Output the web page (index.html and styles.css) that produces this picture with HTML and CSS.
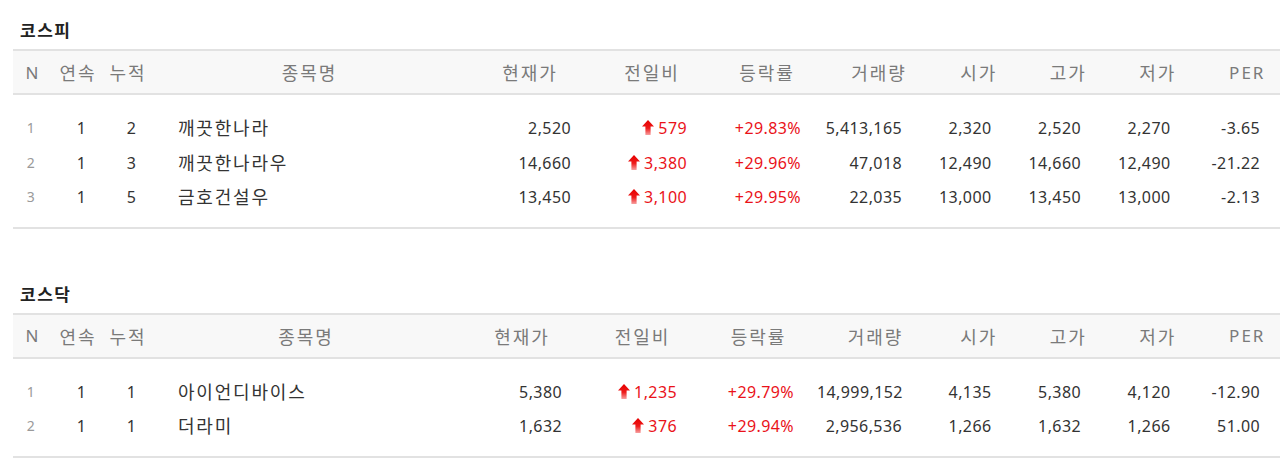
FILE: index.html
```html
<!DOCTYPE html>
<html lang="ko">
<head>
<meta charset="utf-8">
<title>상한가</title>
<link rel="stylesheet" href="styles.css">
</head>
<body>
<svg class="defs" width="0" height="0" aria-hidden="true">
  <defs>
    <linearGradient id="upg" x1="0" y1="0" x2="0" y2="1">
      <stop offset="0" stop-color="#e60000"/>
      <stop offset="0.55" stop-color="#ee1a1a"/>
      <stop offset="1" stop-color="#f7a0a0"/>
    </linearGradient>
    <symbol id="up" viewBox="0 0 12 15">
      <polygon points="6,0 12,6.5 8.6,6.5 8.6,15 3.4,15 3.4,6.5 0,6.5" fill="url(#upg)"/>
    </symbol>
  </defs>
</svg>
<div class="page">
  <section class="market">
    <h2 class="market-title">코스피</h2>
    <div class="table-wrap">
      <table class="rank kospi">
        <colgroup>
          <col class="c-n"><col class="c-cnt"><col class="c-cnt"><col class="c-name-1">
          <col class="c-price-1"><col class="c-diff-1"><col class="c-rate-1"><col class="c-vol-1">
          <col class="c-small"><col class="c-small"><col class="c-small"><col class="c-small">
        </colgroup>
        <thead>
          <tr><th class="latin">N</th><th>연속</th><th>누적</th><th>종목명</th><th>현재가</th><th>전일비</th><th>등락률</th><th>거래량</th><th>시가</th><th>고가</th><th>저가</th><th class="latin">PER</th></tr>
        </thead>
        <tbody>
          <tr><td class="n">1</td><td class="cnt">1</td><td class="cnt">2</td><td class="name">깨끗한나라</td><td class="num">2,520</td><td class="num up"><svg class="arrow"><use href="#up"/></svg>579</td><td class="num up">+29.83%</td><td class="num wide">5,413,165</td><td class="num wide">2,320</td><td class="num wide">2,520</td><td class="num wide">2,270</td><td class="num wide">-3.65</td></tr>
          <tr><td class="n">2</td><td class="cnt">1</td><td class="cnt">3</td><td class="name">깨끗한나라우</td><td class="num">14,660</td><td class="num up"><svg class="arrow"><use href="#up"/></svg>3,380</td><td class="num up">+29.96%</td><td class="num wide">47,018</td><td class="num wide">12,490</td><td class="num wide">14,660</td><td class="num wide">12,490</td><td class="num wide">-21.22</td></tr>
          <tr><td class="n">3</td><td class="cnt">1</td><td class="cnt">5</td><td class="name">금호건설우</td><td class="num">13,450</td><td class="num up"><svg class="arrow"><use href="#up"/></svg>3,100</td><td class="num up">+29.95%</td><td class="num wide">22,035</td><td class="num wide">13,000</td><td class="num wide">13,450</td><td class="num wide">13,000</td><td class="num wide">-2.13</td></tr>
        </tbody>
      </table>
    </div>
  </section>
  <section class="market">
    <h2 class="market-title">코스닥</h2>
    <div class="table-wrap">
      <table class="rank kosdaq">
        <colgroup>
          <col class="c-n"><col class="c-cnt"><col class="c-cnt"><col class="c-name-2">
          <col class="c-price-2"><col class="c-diff-2"><col class="c-rate-2"><col class="c-vol-2">
          <col class="c-small"><col class="c-small"><col class="c-small"><col class="c-small">
        </colgroup>
        <thead>
          <tr><th class="latin">N</th><th>연속</th><th>누적</th><th>종목명</th><th>현재가</th><th>전일비</th><th>등락률</th><th>거래량</th><th>시가</th><th>고가</th><th>저가</th><th class="latin">PER</th></tr>
        </thead>
        <tbody>
          <tr><td class="n">1</td><td class="cnt">1</td><td class="cnt">1</td><td class="name">아이언디바이스</td><td class="num">5,380</td><td class="num up"><svg class="arrow"><use href="#up"/></svg>1,235</td><td class="num up">+29.79%</td><td class="num wide">14,999,152</td><td class="num wide">4,135</td><td class="num wide">5,380</td><td class="num wide">4,120</td><td class="num wide">-12.90</td></tr>
          <tr><td class="n">2</td><td class="cnt">1</td><td class="cnt">1</td><td class="name">더라미</td><td class="num">1,632</td><td class="num up"><svg class="arrow"><use href="#up"/></svg>376</td><td class="num up">+29.94%</td><td class="num wide">2,956,536</td><td class="num wide">1,266</td><td class="num wide">1,632</td><td class="num wide">1,266</td><td class="num wide">51.00</td></tr>
        </tbody>
      </table>
    </div>
  </section>
</div>
</body>
</html>
```
FILE: styles.css
```css
html, body {
  margin: 0;
  padding: 0;
  background: #fff;
  overflow: hidden;
}
body {
  font-family: "Noto Sans", "Noto Sans CJK KR", sans-serif;
  color: #333;
}
.defs {
  position: absolute;
  width: 0;
  height: 0;
}
.page {
  padding: 0 0 0 13px;
  display: flex;
  flex-direction: column;
  gap: 35px;
}
.market-title {
  margin: 0;
  height: 49px;
  box-sizing: border-box;
  padding: 20px 0 0 7px;
  font-size: 17px;
  line-height: 22px;
  letter-spacing: 1.5px;
  font-weight: bold;
  color: #222;
}
.table-wrap {
  overflow: hidden;
}
.rank {
  border-collapse: collapse;
  table-layout: fixed;
  width: 1278px;
  font-size: 16px;
}
.rank thead tr {
  background: #f8f8f8;
  border-top: 2px solid #e2e2e2;
  border-bottom: 2px solid #e2e2e2;
}
.rank th {
  height: 42px;
  padding: 0;
  font-weight: normal;
  font-size: 18px;
  letter-spacing: 2px;
  color: #7a7a7a;
  text-align: center;
  white-space: nowrap;
}
.rank th.latin {
  font-size: 17px;
  letter-spacing: 2px;
}
.rank tbody {
  border-bottom: 2px solid #e2e2e2;
}
.rank td {
  height: 34.5px;
  padding: 0;
  white-space: nowrap;
  line-height: 20px;
  letter-spacing: 0.4px;
}
.rank tbody tr:first-child td {
  padding-top: 16px;
}
.rank tbody tr:last-child td {
  padding-bottom: 12px;
}
.rank td.n {
  text-align: center;
  font-size: 14px;
  color: #9a9a9a;
  padding-right: 4px;
}
.rank td.cnt {
  text-align: center;
  padding-left: 7px;
}
.rank td.name {
  padding-left: 25px;
  font-size: 18px;
  letter-spacing: 1.8px;
}
.rank td.num {
  text-align: right;
  padding-right: 23px;
}
.rank td.wide {
  padding-right: 32px;
}
.rank td.up {
  color: #ea1219;
}
.arrow {
  width: 12px;
  height: 15px;
  margin-right: 4px;
  vertical-align: -1px;
}

/* column widths */
.c-n { width: 40px; }
.c-cnt { width: 50px; }
.c-small { width: 89.5px; }
.c-name-1 { width: 313px; }
.c-price-1 { width: 128px; }
.c-diff-1 { width: 116px; }
.c-rate-1 { width: 114px; }
.c-vol-1 { width: 110px; }
.c-name-2 { width: 306px; }
.c-price-2 { width: 126px; }
.c-diff-2 { width: 115px; }
.c-rate-2 { width: 117px; }
.c-vol-2 { width: 117px; }
```
